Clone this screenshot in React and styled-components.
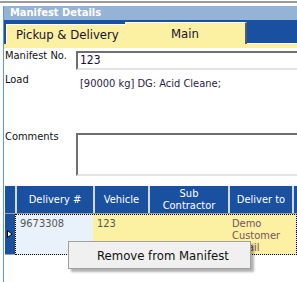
import React from 'react';
import styled, { createGlobalStyle } from 'styled-components';

const GlobalStyle = createGlobalStyle`
  body {
    margin: 0;
    background: #fff;
    font-family: "DejaVu Sans Condensed", "DejaVu Sans", "Liberation Sans", sans-serif;
  }
`;

const YELLOW = '#fcf0a2';
const NAVY = '#1a50a0';

const Page = styled.div`
  position: relative;
  width: 297px;
  height: 282px;
  overflow: hidden;
  padding-top: 1px;
  box-sizing: border-box;
`;

const TopRule = styled.div`
  height: 2px;
  background: #9a9a9a;
  margin-bottom: 3px;
`;

const Frame = styled.div`
  margin-left: 3px;
  border-left: 1px solid #5b9bd5;
  height: 100%;
`;

const PanelTitle = styled.div`
  height: 14px;
  line-height: 14px;
  background: #95b3d7;
  color: #fff;
  font-weight: bold;
  font-size: 11px;
  padding-left: 6px;
  font-family: "DejaVu Sans", sans-serif;
  font-stretch: condensed;
`;

const TabBar = styled.div`
  display: flex;
  align-items: flex-end;
  height: 24px;
  background: ${NAVY};
  padding-left: 2px;
`;

const Tab = styled.div`
  box-sizing: border-box;
  width: ${p => p.$width}px;
  height: ${p => (p.$active ? 22 : 20)}px;
  background: ${YELLOW};
  border-top: 1px solid #fff;
  border-left: ${p => (p.$active ? 0 : 1)}px solid #fff;
  border-right: ${p => (p.$active ? 2 : 0)}px solid #5a5a5a;
  color: #201030;
  font-size: 13px;
  display: flex;
  align-items: center;
  justify-content: ${p => (p.$active ? 'center' : 'flex-start')};
  padding-left: ${p => (p.$active ? 0 : 9)}px;
`;

const TabRest = styled.div`
  flex: 1;
  height: 1px;
  background: #fff;
`;

const YellowStrip = styled.div`
  height: 4px;
  background: ${YELLOW};
`;

const Field = styled.div`
  display: flex;
  align-items: flex-start;
  margin-top: ${p => p.$top}px;
  padding-left: 1px;
`;

const Label = styled.div`
  width: 71px;
  flex: none;
  font-size: 11px;
  line-height: 13px;
  color: #111;
`;

const TextBox = styled.div`
  flex: 1;
  box-sizing: border-box;
  margin-top: ${p => p.$top}px;
  height: ${p => p.$height}px;
  border-top: 2px solid #6f6f6f;
  border-left: 2px solid #6f6f6f;
  border-bottom: 2px solid #e3e3e3;
  background: #fff;
  font-size: 12px;
  line-height: 15px;
  padding-left: 2px;
  color: #1a1030;
`;

const Value = styled.div`
  margin-top: 4px;
  padding-left: 4px;
  font-size: 11px;
  line-height: 13px;
  color: #2b1b4b;
  white-space: nowrap;
`;

const Grid = styled.div`
  margin-top: 10px;
  margin-left: 1px;
`;

const COLS = '10px 78px 55px 80px 64px 1fr';

const HeaderRow = styled.div`
  display: grid;
  grid-template-columns: ${COLS};
  grid-template-rows: 27px;
  border-bottom: 1px solid #a0a0a0;
`;

const HeadCell = styled.div`
  background: ${NAVY};
  border-left: ${p => (p.$first ? 0 : 2)}px solid #d4d8de;
  color: #fff;
  font-size: 11px;
  line-height: 12px;
  display: flex;
  align-items: center;
  justify-content: center;
  text-align: center;
  white-space: pre-line;
  overflow: hidden;
`;

const DataRow = styled.div`
  display: grid;
  grid-template-columns: ${COLS};
  grid-template-rows: 41px;
`;

const Selector = styled.div`
  background: ${NAVY};
  border-bottom: 1px solid #a0a0a0;
  display: flex;
  align-items: center;
  padding-left: 2px;
`;

const RowBody = styled.div`
  grid-column: 2 / -1;
  display: grid;
  grid-template-columns: 78px 55px 80px 64px 1fr;
  grid-template-rows: 41px;
  outline: 1px dotted #000;
  outline-offset: -1px;
  overflow: hidden;
`;

const Cell = styled.div`
  background: ${p => (p.$key ? '#e9f2fb' : YELLOW)};
  color: ${p => p.$color || '#555'};
  font-size: 11px;
  line-height: 12px;
  padding: 4px 1px 0 ${p => (p.$key ? 5 : 4)}px;
  overflow: hidden;
  white-space: ${p => (p.$clip ? 'pre' : 'pre-line')};
`;

const Menu = styled.div`
  position: absolute;
  left: 68px;
  top: 241px;
  width: 183px;
  height: 28px;
  box-sizing: border-box;
  background: #f0f0f0;
  border: 1px solid #a0a0a0;
  box-shadow: 3px 3px 2px rgba(0, 0, 0, 0.3);
  display: flex;
  align-items: center;
`;

const MenuItem = styled.div`
  padding-left: 28px;
  font-size: 13px;
  color: #111;
`;

const RowArrow = () => (
  <svg width="6" height="8" viewBox="0 0 6 8">
    <path d="M0.5 0.5 L5 4 L0.5 7.5 Z" fill="#fff" stroke="#000" strokeWidth="1" />
  </svg>
);

export default function App() {
  return (
    <Page>
      <GlobalStyle />
      <TopRule />
      <Frame>
        <PanelTitle>Manifest Details</PanelTitle>
        <TabBar>
          <Tab $width={119}>Pickup &amp; Delivery</Tab>
          <Tab $width={122} $active>Main</Tab>
          <TabRest />
        </TabBar>
        <YellowStrip />

        <Field $top={1}>
          <Label>Manifest No.</Label>
          <TextBox $top={2} $height={19}>123</TextBox>
        </Field>
        <Field $top={3}>
          <Label>Load</Label>
          <Value>[90000 kg] DG: Acid Cleane;</Value>
        </Field>
        <Field $top={40}>
          <Label>Comments</Label>
          <TextBox $top={3} $height={43} />
        </Field>

        <Grid>
          <HeaderRow>
            <HeadCell $first />
            <HeadCell>Delivery #</HeadCell>
            <HeadCell>Vehicle</HeadCell>
            <HeadCell>{'Sub\nContractor'}</HeadCell>
            <HeadCell>Deliver to</HeadCell>
            <HeadCell />
          </HeaderRow>
          <DataRow>
            <Selector>
              <RowArrow />
            </Selector>
            <RowBody>
              <Cell $key>9673308</Cell>
              <Cell>123</Cell>
              <Cell />
              <Cell $color="#7a5060">Demo Customer Email</Cell>
              <Cell $color="#8a3030" $clip>{'I\nW\nI'}</Cell>
            </RowBody>
          </DataRow>
        </Grid>
      </Frame>

      <Menu>
        <MenuItem>Remove from Manifest</MenuItem>
      </Menu>
    </Page>
  );
}
